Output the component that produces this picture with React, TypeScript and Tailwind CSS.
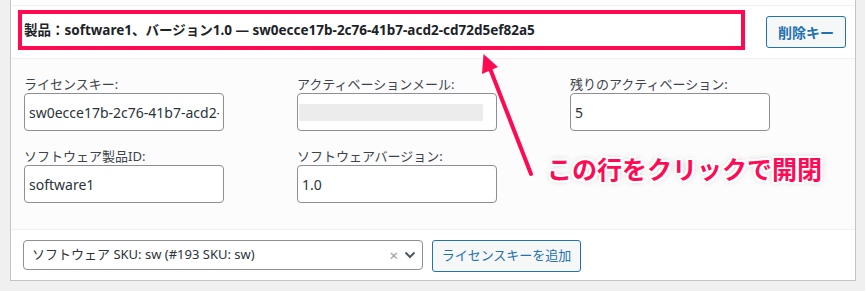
import React from "react";

const font = {
  fontFamily: '"Segoe UI", "Noto Sans", "Noto Sans CJK JP", sans-serif',
};

const boxCls =
  "w-[200px] h-[38px] border border-[#8c8f94] rounded-[4px] bg-white px-[4px] text-[14px] text-[#2c3338] outline-none";

function Field({ label, children }: { label: string; children: React.ReactNode }) {
  return (
    <div className="flex flex-col">
      <div className="h-[18px] text-[13px] leading-[18px] text-[#3c434a] whitespace-nowrap">{label}</div>
      {children}
    </div>
  );
}

export default function App() {
  return (
    <div className="relative w-[865px] h-[291px] bg-[#f0f0f1] pl-[10px] overflow-hidden" style={font}>
      <div className="w-[846px] border-l border-r border-b border-[#c3c4c7] bg-white">
        <div className="h-[6px] bg-white border-b border-[#f0f0f1]" />
        <div className="h-[53px] flex items-start justify-between border-b border-[#f0f0f1] bg-white">
          <div className="ml-[7px] mt-[4px] w-[727px] h-[40px] border-[4px] border-[#ff0a52] flex items-center pl-[2px] text-[13.5px] font-bold text-[#1d2327] whitespace-nowrap">
            製品：software1、バージョン1.0 — sw0ecce17b-2c76-41b7-acd2-cd72d5ef82a5
          </div>
          <button className="mr-[9px] mt-[10px] h-[32px] w-[80px] border border-[#2271b1] rounded-[3px] bg-[#f6f7f7] text-[14px] font-semibold text-[#2271b1]">
            削除キー
          </button>
        </div>
        <div className="h-[171px] bg-[#fcfcfc] border-b border-[#f0f0f1] pl-[13px] pt-[16px]">
          <div className="grid grid-cols-[273px_273px_273px] gap-y-[16px]">
            <Field label="ライセンスキー:">
              <input readOnly className={boxCls} style={font} value="sw0ecce17b-2c76-41b7-acd2-cd72d5ef82a5" />
            </Field>
            <Field label="アクティベーションメール:">
              <div className="w-[200px] h-[38px] border border-[#8c8f94] rounded-[4px] bg-white flex items-center pl-[1px]">
                <div className="w-[184px] h-[17px] bg-[#ececec] rounded-[1px]" />
              </div>
            </Field>
            <Field label="残りのアクティベーション:">
              <input readOnly className={boxCls} style={font} value="5" />
            </Field>
            <Field label="ソフトウェア製品ID:">
              <input readOnly className={boxCls} style={font} value="software1" />
            </Field>
            <Field label="ソフトウェアバージョン:">
              <input readOnly className={boxCls} style={font} value="1.0" />
            </Field>
          </div>
        </div>
        <div className="h-[50px] bg-white flex items-start pl-[12px] pt-[10px] gap-[9px]">
          <div className="w-[400px] h-[30px] border border-[#8c8f94] rounded-[4px] bg-white flex items-center pl-[8px] pr-[6px] text-[13px] text-[#2c3338]">
            <span className="flex-1 whitespace-nowrap">ソフトウェア SKU: sw (#193 SKU: sw)</span>
            <span className="text-[#999] text-[15px] leading-none mr-[6px]">×</span>
            <svg width="12" height="8" viewBox="0 0 12 8">
              <path d="M1.5 1.5 L6 6 L10.5 1.5" fill="none" stroke="#50575e" strokeWidth="2" />
            </svg>
          </div>
          <button className="h-[32px] w-[149px] border border-[#2271b1] rounded-[3px] bg-[#f6f7f7] text-[13px] text-[#2271b1] whitespace-nowrap">
            ライセンスキーを追加
          </button>
        </div>
      </div>

      <svg className="absolute left-0 top-0 pointer-events-none" width="865" height="291">
        <line x1="489" y1="66" x2="531" y2="174" stroke="#ff0a52" strokeWidth="4" strokeLinecap="round" />
        <path d="M483.5 54 L482 74 L498 67 Z" fill="#ff0a52" />
      </svg>

      <div
        className="absolute left-[547px] top-[150px] text-[25px] font-bold text-[#ff0a55] whitespace-nowrap leading-[36px] [text-shadow:2px_0_0_#fff,-2px_0_0_#fff,0_2px_0_#fff,0_-2px_0_#fff,2px_2px_0_#fff,-2px_-2px_0_#fff,2px_-2px_0_#fff,-2px_2px_0_#fff,0_0_6px_rgba(0,0,0,0.35)]"
        style={{ fontFamily: '"Noto Sans CJK JP", sans-serif' }}
      >
        この行をクリックで開閉
      </div>
    </div>
  );
}
